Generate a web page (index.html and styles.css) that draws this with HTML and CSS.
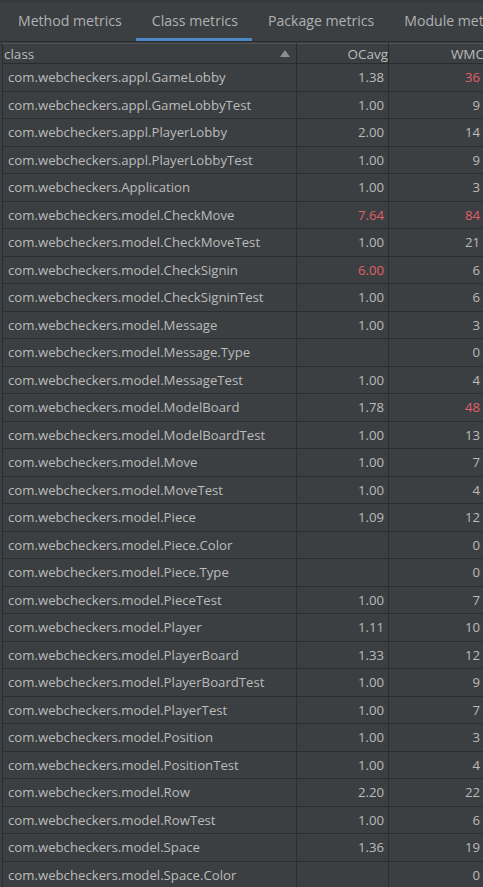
FILE: index.html
```html
<!DOCTYPE html>
<html>
<head>
<meta charset="utf-8">
<link rel="stylesheet" href="styles.css">
</head>
<body>
<div class="panel">
  <div class="tabs">
    <div class="tab">Method metrics</div>
    <div class="tab active">Class metrics</div>
    <div class="tab">Package metrics</div>
    <div class="tab">Module metrics</div>
  </div>
  <div class="table-wrap">
    <table class="metrics">
      <colgroup><col class="c1"><col class="c2"><col class="c3"></colgroup>
      <thead>
        <tr>
          <th class="name">class<svg class="sort" width="10" height="7" viewBox="0 0 10 7"><polygon points="0,7 10,7 5,0" fill="#8c8f91"/></svg></th>
          <th class="num">OCavg</th>
          <th class="num">WMC</th>
        </tr>
      </thead>
      <tbody>
        <tr><td>com.webcheckers.appl.GameLobby</td><td class="num">1.38</td><td class="num red">36</td></tr>
        <tr><td>com.webcheckers.appl.GameLobbyTest</td><td class="num">1.00</td><td class="num">9</td></tr>
        <tr><td>com.webcheckers.appl.PlayerLobby</td><td class="num">2.00</td><td class="num">14</td></tr>
        <tr><td>com.webcheckers.appl.PlayerLobbyTest</td><td class="num">1.00</td><td class="num">9</td></tr>
        <tr><td>com.webcheckers.Application</td><td class="num">1.00</td><td class="num">3</td></tr>
        <tr><td>com.webcheckers.model.CheckMove</td><td class="num red">7.64</td><td class="num red">84</td></tr>
        <tr><td>com.webcheckers.model.CheckMoveTest</td><td class="num">1.00</td><td class="num">21</td></tr>
        <tr><td>com.webcheckers.model.CheckSignin</td><td class="num red">6.00</td><td class="num">6</td></tr>
        <tr><td>com.webcheckers.model.CheckSigninTest</td><td class="num">1.00</td><td class="num">6</td></tr>
        <tr><td>com.webcheckers.model.Message</td><td class="num">1.00</td><td class="num">3</td></tr>
        <tr><td>com.webcheckers.model.Message.Type</td><td class="num"></td><td class="num">0</td></tr>
        <tr><td>com.webcheckers.model.MessageTest</td><td class="num">1.00</td><td class="num">4</td></tr>
        <tr><td>com.webcheckers.model.ModelBoard</td><td class="num">1.78</td><td class="num red">48</td></tr>
        <tr><td>com.webcheckers.model.ModelBoardTest</td><td class="num">1.00</td><td class="num">13</td></tr>
        <tr><td>com.webcheckers.model.Move</td><td class="num">1.00</td><td class="num">7</td></tr>
        <tr><td>com.webcheckers.model.MoveTest</td><td class="num">1.00</td><td class="num">4</td></tr>
        <tr><td>com.webcheckers.model.Piece</td><td class="num">1.09</td><td class="num">12</td></tr>
        <tr><td>com.webcheckers.model.Piece.Color</td><td class="num"></td><td class="num">0</td></tr>
        <tr><td>com.webcheckers.model.Piece.Type</td><td class="num"></td><td class="num">0</td></tr>
        <tr><td>com.webcheckers.model.PieceTest</td><td class="num">1.00</td><td class="num">7</td></tr>
        <tr><td>com.webcheckers.model.Player</td><td class="num">1.11</td><td class="num">10</td></tr>
        <tr><td>com.webcheckers.model.PlayerBoard</td><td class="num">1.33</td><td class="num">12</td></tr>
        <tr><td>com.webcheckers.model.PlayerBoardTest</td><td class="num">1.00</td><td class="num">9</td></tr>
        <tr><td>com.webcheckers.model.PlayerTest</td><td class="num">1.00</td><td class="num">7</td></tr>
        <tr><td>com.webcheckers.model.Position</td><td class="num">1.00</td><td class="num">3</td></tr>
        <tr><td>com.webcheckers.model.PositionTest</td><td class="num">1.00</td><td class="num">4</td></tr>
        <tr><td>com.webcheckers.model.Row</td><td class="num">2.20</td><td class="num">22</td></tr>
        <tr><td>com.webcheckers.model.RowTest</td><td class="num">1.00</td><td class="num">6</td></tr>
        <tr><td>com.webcheckers.model.Space</td><td class="num">1.36</td><td class="num">19</td></tr>
        <tr><td>com.webcheckers.model.Space.Color</td><td class="num"></td><td class="num">0</td></tr>
      </tbody>
    </table>
  </div>
</div>
</body>
</html>
```

FILE: styles.css
```css
html, body {
  margin: 0;
  padding: 0;
  background: #3c3f41;
  overflow: hidden;
}
.panel {
  width: 483px;
  height: 887px;
  overflow: hidden;
  background: #3c3f41;
  font-family: "Open Sans", "Noto Sans", sans-serif;
  color: #bbbbbb;
}
.tabs {
  display: flex;
  height: 42px;
  padding-left: 2px;
  border-bottom: 1px solid #2b2b2b;
  white-space: nowrap;
  box-sizing: border-box;
  border-top: 2px solid #36393b;
}
.tab {
  flex: none;
  position: relative;
  padding: 0 14px 0 16px;
  font-size: 14.1px;
  line-height: 38px;
  color: #afb1b3;
}
.tab.active::after {
  content: "";
  position: absolute;
  left: 0;
  right: 0;
  bottom: 0;
  height: 3px;
  background: #4a88c7;
}
.table-wrap {
  padding-left: 2px;
  padding-top: 1px;
}
.metrics {
  border-collapse: collapse;
  table-layout: fixed;
  width: 490px;
  font-size: 13.2px;
}
.c1 { width: 294px; }
.c2 { width: 92px; }
.c3 { width: 104px; }
.metrics th {
  height: 19px;
  padding: 0 0 0 1px;
  font-weight: normal;
  font-size: 13.5px;
  text-align: left;
  color: #bbbbbb;
  line-height: 18px;
  border: 1px solid #2b2b2b;
  border-top: 1px solid #515456;
  white-space: nowrap;
  overflow: hidden;
}
.metrics th.name { position: relative; }
.sort {
  position: absolute;
  right: 6px;
  top: 6px;
}
.metrics th.num {
  text-align: right;
  padding: 0 0 0 0;
}
.metrics th:last-child { padding-right: 8px; }
.metrics td {
  height: 26.5px;
  padding: 0 0 0 5px;
  border: 1px solid #2b2d2e;
  white-space: nowrap;
  overflow: hidden;
  color: #bbbbbb;
}
.metrics td.num {
  text-align: right;
  padding: 0 4px 0 0;
}
.metrics td:last-child { padding-right: 12px; }
.red { color: #e0606a !important; }
```
